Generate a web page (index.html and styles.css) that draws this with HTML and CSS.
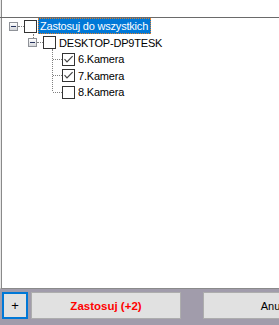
FILE: index.html
```html
<!DOCTYPE html>
<html>
<head>
<meta charset="utf-8">
<link rel="stylesheet" href="styles.css">
</head>
<body>
<div class="header"></div>
<div class="rule"></div>
<div class="treebox">
  <ul class="tree">
    <li>
      <div class="row lvl0">
        <span class="exp"><i></i></span><span class="hline"></span><span class="cb"></span><span class="label sel">Zastosuj do wszystkich</span>
      </div>
      <ul class="children c1">
        <li>
          <div class="row lvl1">
            <span class="exp"><i></i></span><span class="hline"></span><span class="cb"></span><span class="label">DESKTOP-DP9TESK</span>
          </div>
          <ul class="children c2">
            <li><div class="row lvl2"><span class="twig"></span><span class="cb"><svg viewBox="0 0 11 11" width="11" height="11"><path d="M1.5 5.2 L4 7.8 L9.6 2.2" fill="none" stroke="#444" stroke-width="1.2"/></svg></span><span class="label">6.Kamera</span></div></li>
            <li><div class="row lvl2"><span class="twig"></span><span class="cb"><svg viewBox="0 0 11 11" width="11" height="11"><path d="M1.5 5.2 L4 7.8 L9.6 2.2" fill="none" stroke="#444" stroke-width="1.2"/></svg></span><span class="label">7.Kamera</span></div></li>
            <li><div class="row lvl2"><span class="twig"></span><span class="cb"></span><span class="label">8.Kamera</span></div></li>
          </ul>
        </li>
      </ul>
    </li>
  </ul>
</div>
<div class="footer">
  <button class="btn plus">+</button>
  <button class="btn apply">Zastosuj (+2)</button>
  <button class="btn cancel">Anuluj</button>
</div>
</body>
</html>
```
FILE: styles.css
```css
html, body {
  margin: 0;
  padding: 0;
}
body {
  width: 279px;
  height: 325px;
  overflow: hidden;
  background: #a19cab;
  font-family: "Liberation Sans", Arial, sans-serif;
  font-size: 11px;
}
.header {
  height: 17px;
  background: #fff;
  border-left: 1px solid #e8e8e8;
  box-shadow: inset 1px 0 0 #8a8a8a;
}
.rule {
  height: 1px;
  background: #6a6a6a;
}
.treebox {
  height: 270px;
  background: #fff;
  border-left: 1px solid #e8e8e8;
  box-shadow: inset 1px 0 0 #8a8a8a;
  border-bottom: 1px solid #8a8a8a;
}
.tree, .children {
  list-style: none;
  margin: 0;
  padding: 0;
}
.children {
  position: relative;
}
.c1::before {
  content: "";
  position: absolute;
  left: 32px;
  top: -1px;
  height: 4px;
  border-left: 1px dotted #808080;
}
.c2::before {
  content: "";
  position: absolute;
  left: 51px;
  top: -2px;
  height: 42px;
  border-left: 1px dotted #808080;
}
.row {
  display: flex;
  align-items: center;
  height: 16.5px;
}
.lvl0 { padding-left: 8px; }
.lvl1 { padding-left: 27px; }
.lvl2 { padding-left: 46px; }
.exp {
  box-sizing: border-box;
  width: 9px;
  height: 9px;
  border: 1px solid #8f9298;
  background: linear-gradient(#ffffff, #d4d6da);
  display: flex;
  align-items: center;
  justify-content: center;
}
.exp i {
  display: block;
  width: 5px;
  height: 1px;
  background: #27345e;
}
.hline {
  width: 6px;
  height: 0;
  border-top: 1px dotted #808080;
}
.twig {
  width: 9px;
  margin-left: 6px;
  height: 0;
  border-top: 1px dotted #808080;
}
.cb {
  box-sizing: border-box;
  width: 13px;
  height: 13px;
  border: 1px solid #333;
  background: #fff;
  display: flex;
  align-items: center;
  justify-content: center;
}
.cb svg {
  display: block;
}
.label {
  box-sizing: border-box;
  height: 16px;
  line-height: 14px;
  padding: 1px 2px 0 2px;
  margin-left: 1px;
  color: #000;
  white-space: nowrap;
  letter-spacing: -0.2px;
}
.sel {
  background: #0078d7;
  color: #fff;
  border: 1px dotted #e0802c;
  padding: 0 2px 0 1px;
}
.footer {
  display: flex;
  padding: 3px 0 0 2px;
  height: 33px;
  box-sizing: border-box;
}
.btn {
  box-sizing: border-box;
  height: 27px;
  margin: 0;
  padding: 0;
  background: #e1e1e1;
  border: 1px solid #adadad;
  font-family: "Liberation Sans", Arial, sans-serif;
  font-size: 11px;
  color: #000;
  flex: none;
}
.plus {
  width: 26px;
  border: 2px solid #0078d7;
  font-size: 13px;
}
.apply {
  width: 150px;
  margin-left: 3px;
  color: #ff0000;
  font-weight: bold;
  font-size: 11.5px;
}
.cancel {
  width: 146px;
  margin-left: 22px;
}
```
